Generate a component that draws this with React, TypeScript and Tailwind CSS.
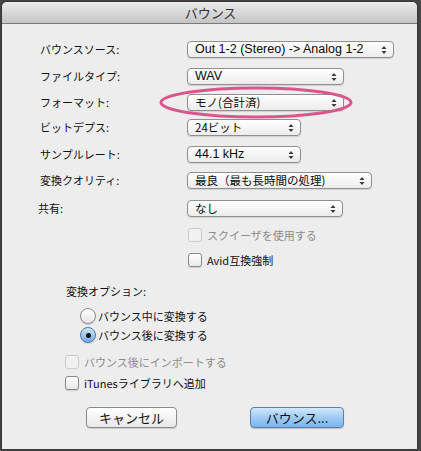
import React from "react";

const jp = { fontFamily: '"Noto Sans CJK JP", "Liberation Sans", sans-serif' } as React.CSSProperties;
const lat = { fontFamily: '"Liberation Sans", "Noto Sans CJK JP", sans-serif' } as React.CSSProperties;

function Arrows() {
  return (
    <svg width="6" height="10" viewBox="0 0 6 10" className="shrink-0">
      <path d="M0.5 4 L3 1 L5.5 4 Z" fill="#3a3a3a" />
      <path d="M0.5 6 L3 9 L5.5 6 Z" fill="#3a3a3a" />
    </svg>
  );
}

function Select({ w, text, latin }: { w: string; text: string; latin?: boolean }) {
  return (
    <div
      className={`${w} h-[17px] flex items-center justify-between pl-[7px] pr-[6px] rounded-[4px] border border-[#8f8f8f] bg-gradient-to-b from-[#ffffff] to-[#ececec] shadow-[0_1px_1px_rgba(0,0,0,0.12)]`}
    >
      <span
        className={`${latin ? "text-[12.5px]" : "text-[11.5px]"} leading-none text-[#0a0a0a] whitespace-nowrap`}
        style={latin ? lat : jp}
      >
        {text}
      </span>
      <Arrows />
    </div>
  );
}

function Row({ label, mt, children, lx }: { label: string; mt: string; children: React.ReactNode; lx?: string }) {
  return (
    <div className={`flex items-center h-[17px] ${mt}`}>
      <div className={`w-[185px] ${lx ?? "pl-[38px]"} text-[11px] leading-none text-[#111]`} style={jp}>
        {label}
      </div>
      {children}
    </div>
  );
}

function Check({ label, disabled, mt, pl }: { label: string; disabled?: boolean; mt: string; pl: string }) {
  return (
    <div className={`flex items-center h-[14px] ${mt} ${pl}`}>
      <div
        className={`w-[14px] h-[14px] rounded-[3px] border ${
          disabled ? "border-[#c9c9c9] bg-[#f1f1f1]" : "border-[#8a8a8a] bg-gradient-to-b from-[#ffffff] to-[#e9e9e9] shadow-[0_1px_1px_rgba(0,0,0,0.15)]"
        }`}
      />
      <span
        className={`ml-[5px] text-[11px] leading-none ${disabled ? "text-[#8c8c8c]" : "text-[#111]"}`}
        style={jp}
      >
        {label}
      </span>
    </div>
  );
}

function Radio({ label, selected, mt }: { label: string; selected?: boolean; mt: string }) {
  return (
    <div className={`flex items-center h-[16px] ${mt} pl-[78px]`}>
      <div
        className={`w-[16px] h-[16px] rounded-full border flex items-center justify-center ${
          selected
            ? "border-[#56779f] bg-gradient-to-b from-[#cfe4fa] to-[#6fa8e6]"
            : "border-[#8a8a8a] bg-gradient-to-b from-[#ffffff] to-[#e6e6e6]"
        } shadow-[0_1px_1px_rgba(0,0,0,0.15)]`}
      >
        {selected && <div className="w-[5px] h-[5px] rounded-full bg-[#111]" />}
      </div>
      <span className="ml-[2px] text-[11px] leading-none text-[#111]" style={jp}>
        {label}
      </span>
    </div>
  );
}

export default function App() {
  return (
    <div className="w-[421px] h-[451px] bg-[#474747] pl-[2px] pt-[2px] overflow-hidden">
      <div className="w-[415px] h-[447px] bg-[#ededed] rounded-t-[5px] flex flex-col shadow-[0_0_3px_rgba(0,0,0,0.6)]">
        <div className="h-[22px] shrink-0 rounded-t-[5px] bg-gradient-to-b from-[#ebebeb] to-[#c5c5c5] border-b border-[#7b7b7b] flex items-center justify-center">
          <span className="text-[13px] leading-none text-[#333] pl-[2px]" style={jp}>
            バウンス
          </span>
        </div>

        <Row label="バウンスソース:" mt="mt-[17px]">
          <Select w="w-[207px]" text="Out 1-2 (Stereo) -> Analog 1-2" latin />
        </Row>
        <Row label="ファイルタイプ:" mt="mt-[10px]">
          <Select w="w-[157px]" text="WAV" latin />
        </Row>
        <div className="relative">
          <Row label="フォーマット:" mt="mt-[9px]">
            <Select w="w-[157px]" text="モノ(合計済)" />
          </Row>
          <svg
            className="absolute left-[156px] top-[0px] pointer-events-none"
            width="198"
            height="36"
            viewBox="0 0 198 36"
          >
            <ellipse cx="98" cy="17.5" rx="95" ry="14.5" fill="none" stroke="#d9558c" strokeWidth="3" />
          </svg>
        </div>
        <Row label="ビットデプス:" mt="mt-[8px]">
          <Select w="w-[114px]" text="24ビット" />
        </Row>
        <Row label="サンプルレート:" mt="mt-[10px]">
          <Select w="w-[114px]" text="44.1 kHz" latin />
        </Row>
        <Row label="変換クオリティ:" mt="mt-[9px]">
          <Select w="w-[185px]" text="最良（最も長時間の処理)" />
        </Row>
        <Row label="共有:" mt="mt-[11px]" lx="pl-[36px]">
          <Select w="w-[156px]" text="なし" />
        </Row>

        <Check label="スクイーザを使用する" disabled mt="mt-[11px]" pl="pl-[186px]" />
        <Check label="Avid互換強制" mt="mt-[11px]" pl="pl-[186px]" />

        <div className="mt-[17px] pl-[64px] h-[14px] flex items-center text-[11px] leading-none text-[#111]" style={jp}>
          変換オプション:
        </div>

        <Radio label="バウンス中に変換する" mt="mt-[10px]" />
        <Radio label="バウンス後に変換する" selected mt="mt-[3px]" />

        <Check label="バウンス後にインポートする" disabled mt="mt-[12px]" pl="pl-[63px]" />
        <Check label="iTunesライブラリへ追加" mt="mt-[7px]" pl="pl-[63px]" />

        <div className="flex mt-[17px] pl-[84px]">
          <div
            className="w-[91px] h-[21px] rounded-[4px] border border-[#8a8a8a] bg-gradient-to-b from-[#ffffff] to-[#e8e8e8] shadow-[0_1px_1px_rgba(0,0,0,0.15)] flex items-center justify-center text-[13px] leading-none text-[#111]"
            style={jp}
          >
            キャンセル
          </div>
          <div
            className="ml-[73px] w-[94px] h-[21px] rounded-[4px] border border-[#5b7fae] bg-gradient-to-b from-[#d2e8fd] via-[#9fcbf6] to-[#77b6f1] shadow-[0_1px_1px_rgba(0,0,0,0.2)] flex items-center justify-center text-[13px] leading-none text-[#111]"
            style={jp}
          >
            バウンス...
          </div>
        </div>
      </div>
    </div>
  );
}
